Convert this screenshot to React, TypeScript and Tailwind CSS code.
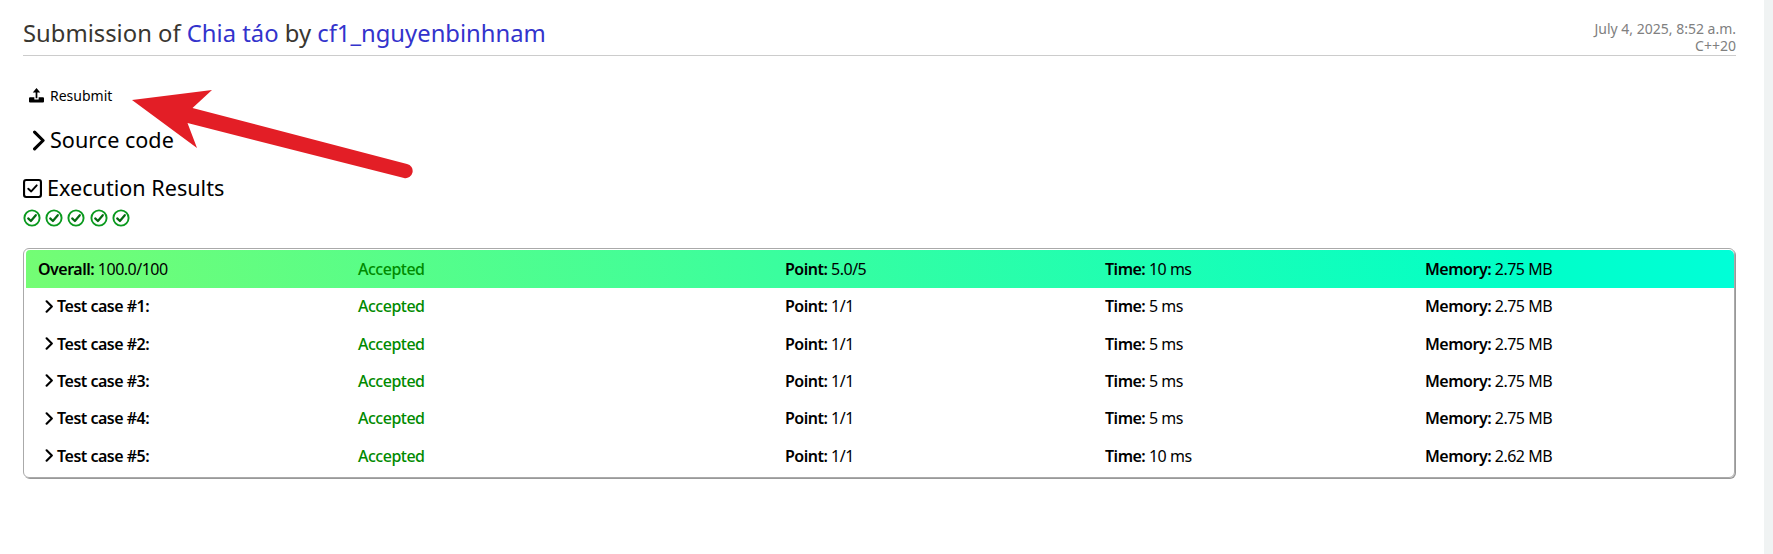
import React from "react";

const font = { fontFamily: '"Noto Sans", sans-serif' };

const rows = [
  ["Test case #1:", "1/1", "5 ms", "2.75 MB"],
  ["Test case #2:", "1/1", "5 ms", "2.75 MB"],
  ["Test case #3:", "1/1", "5 ms", "2.75 MB"],
  ["Test case #4:", "1/1", "5 ms", "2.75 MB"],
  ["Test case #5:", "1/1", "10 ms", "2.62 MB"],
];

function Check() {
  return (
    <svg width="18" height="18" viewBox="0 0 18 18" fill="none">
      <circle cx="9" cy="9" r="7.6" stroke="#0a9a1e" strokeWidth="1.9" />
      <path d="M5.2 9.4 L7.9 12 L12.8 6.2" stroke="#066a12" strokeWidth="2.2" strokeLinecap="round" strokeLinejoin="round" />
    </svg>
  );
}

function Chevron({ size, sw }: { size: number; sw: number }) {
  return (
    <svg width={size * 0.62} height={size} viewBox="0 0 10 16" fill="none">
      <path d="M2 1.5 L8.5 8 L2 14.5" stroke="#000" strokeWidth={sw} strokeLinecap="round" strokeLinejoin="round" />
    </svg>
  );
}

const gridCls = "grid grid-cols-[320px_427px_320px_320px_1fr] items-center";

export default function App() {
  return (
    <div className="relative h-[554px] bg-[#f0f3f3] text-black overflow-hidden" style={font}>
      <div className="mr-[9px] h-full bg-white pl-[23px] pr-[28px]">
        <div className="flex justify-between border-b border-[#ccc] h-[56px] items-end">
          <h2 className="text-[23.8px] leading-[32px] text-[#393630] pb-[6px]">
            Submission of <span className="text-[#3333cc]">Chia táo</span> by{" "}
            <span className="text-[#3333cc]">cf1_nguyenbinhnam</span>
          </h2>
          <div className="text-right text-[14px] leading-[17px] text-[#808080] pb-[1px]">
            <div>July 4, 2025, 8:52 a.m.</div>
            <div>C++20</div>
          </div>
        </div>

        <div className="flex items-center h-[20px] mt-[29px] pl-[6px] text-[14px] gap-[6px]">
          <svg width="15" height="15" viewBox="0 0 14 14" fill="#000">
            <path d="M7 0 L10.5 4.2 H7.8 V9.5 H6.2 V4.2 H3.5 Z" />
            <path d="M1 8.6 H5 V10.8 H9 V8.6 H13 Q14 8.6 14 9.6 V12.5 Q14 13.5 13 13.5 H1 Q0 13.5 0 12.5 V9.6 Q0 8.6 1 8.6 Z" />
          </svg>
          <span>Resubmit</span>
        </div>

        <div className="flex items-center h-[30px] mt-[20px] pl-[9px] text-[21.6px] gap-[5px]">
          <Chevron size={21} sw={2.4} />
          <span>Source code</span>
        </div>

        <div className="flex items-center h-[30px] mt-[18px] text-[21.6px] gap-[5px]">
          <svg width="19" height="19" viewBox="0 0 18 18" fill="none">
            <rect x="1" y="1" width="16" height="16" rx="2" stroke="#000" strokeWidth="2" />
            <path d="M5 9.2 L7.8 11.8 L13 6" stroke="#000" strokeWidth="1.8" strokeLinecap="round" strokeLinejoin="round" />
          </svg>
          <span>Execution Results</span>
        </div>

        <div className="flex gap-[4.2px] h-[18px] mt-[6px]">
          <Check /><Check /><Check /><Check /><Check />
        </div>

        <div className="mt-[21px] mr-[1px] border border-[#aaaaaa] rounded-[6px] shadow-[1px_1px_0_#999999] pt-[1px] pl-[2px] pb-[1px] text-[16px] tracking-[-0.5px]">
          <div className={`${gridCls} h-[38px] pl-[12px] pb-[1px] rounded-tr-[5px] rounded-tl-[4px] bg-[linear-gradient(75deg,#74fd74_0%,#00ffc8_88%,#00ffd8_100%)]`}>
            <div><b className="font-semibold">Overall:</b> 100.0/100</div>
            <div className="font-medium text-[#008a00]">Accepted</div>
            <div><b className="font-semibold">Point:</b> 5.0/5</div>
            <div><b className="font-semibold">Time:</b> 10 ms</div>
            <div><b className="font-semibold">Memory:</b> 2.75 MB</div>
          </div>
          <div className="pb-[1px]">
            {rows.map((r) => (
              <div key={r[0]} className={`${gridCls} h-[37.4px] pl-[12px] pb-[1px]`}>
                <div className="flex items-center gap-[4px] pl-[7px] font-semibold">
                  <Chevron size={13} sw={2.6} />
                  <span>{r[0]}</span>
                </div>
                <div className="font-medium text-[#008a00]">Accepted</div>
                <div><b className="font-semibold">Point:</b> {r[1]}</div>
                <div><b className="font-semibold">Time:</b> {r[2]}</div>
                <div><b className="font-semibold">Memory:</b> {r[3]}</div>
              </div>
            ))}
          </div>
        </div>
      </div>

      <svg className="absolute left-0 top-0 pointer-events-none" width="450" height="200" viewBox="0 0 450 200">
        <path d="M132 100 L212 90 L192.5 108 L407 164 A7 7 0 0 1 404 178 L187.5 123 L197 148 Z" fill="#e31e26" />
      </svg>
    </div>
  );
}
